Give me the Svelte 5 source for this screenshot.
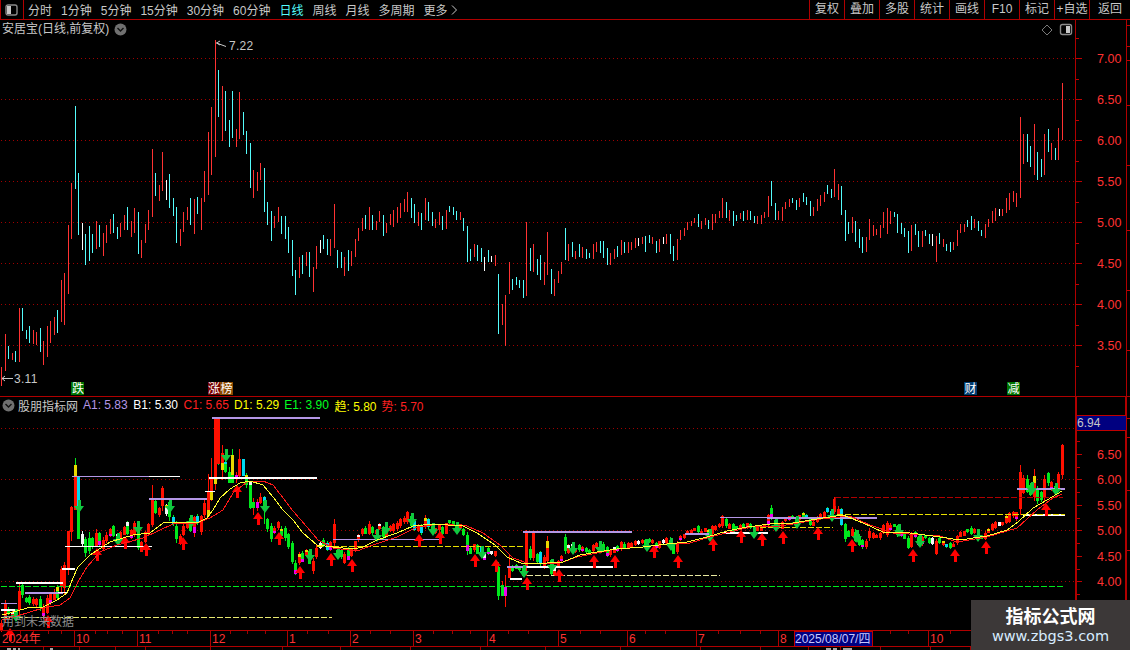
<script>
  const raw = `R367-386 R334-371 C346-359 R353-360 C351-362 R308-362 C308-331 C330-339 C326-343 R330-344 R332-345 C328-352 R341-365 R326-357 R321-343 R317-335 C310-333 R280-322 R273-325 R225-294 R183-239 C106-189 C173-235 W223-250 C234-265 C226-261 C234-253 R221-249 C225-247 R233-256 R225-243 R219-234 C214-233 C227-239 R223-237 R215-230 C207-230 R221-237 R208-233 C212-254 R240-258 R224-243 R210-230 R149-217 C173-196 R185-201 R152-191 W180-200 C174-208 C198-216 C207-243 R229-246 R212-232 R207-220 C198-225 R199-234 C197-214 R198-230 R171-202 R132-195 R107-175 R40-157 C70-117 R86-141 C91-131 C120-147 C91-138 R129-147 R92-139 C112-135 C131-154 C143-188 R170-198 R172-191 R163-180 C168-212 C202-225 C211-241 R216-228 R207-222
  C216-234 C216-239 C227-253 C240-276 C270-295 R257-278 C255-274 R252-266 C252-277 R267-292 R246-269 W240-253 C235-249 C239-255 R239-256 R204-248 C250-268 C252-268 R257-276 C250-271 R251-266 R239-257 R228-241 R218-231 C215-229 R207-230 C215-230 R221-230 R211-222 C215-236 R223-233 R214-225 R210-227 R207-223 R203-218 R199-212 R192-212 C198-218 C204-223 R212-226 C213-230 R198-220 C202-221 C212-226 R219-228 R212-225 C216-230 R210-229 C206-212 C207-215 C211-220 R212-220 C218-231 C226-262 C249-261 R244-257 C245-261 C248-262 W257-271 C250-262 W256-262 R255-266 C274-334 R304-325 R295-346 R262-294 C279-290 C277-285 C280-288 C280-298 R222-296 C248-271 R244-272 C259-275 C255-280 R262-285 R232-275 C269-294 R279-296 R271-283 R262-274 C228-260 R244-261 C242-257 R251-259 C244-257
  R247-258 C249-259 C253-258 R244-259 R242-252 C241-253 C241-258 C248-265 R253-265 R249-259 C246-257 R240-255 C242-253 R242-253 R242-250 R238-248 W238-246 R237-244 C236-252 C235-243 R237-244 C241-253 R239-252 W237-244 R234-244 C234-254 C246-261 R239-260 R230-240 R228-236 R222-230 R221-226 R218-223 C214-227 R221-229 R218-225 C220-229 R214-230 R214-223 R211-218 R198-218 C202-218 R210-221 C211-226 C215-221 R213-219 C211-221 R210-220 C211-220 C216-223 R216-224 R215-224 R212-218 R196-217 C181-206 C203-220 R211-220 R207-221 R202-209 R199-207 C198-203 C200-210 R198-207 C193-202 C197-205 C201-216 R207-216 R199-211 R195-206 R192-202 C185-194 C189-198 R169-197 R184-200 C186-215 C210-241 C222-234 R217-233 C221-242 C229-248 C237-253 R237-252 R219-240 R225-236 R229-235 R225-238 R212-228 R208-234 R211-224 C212-217 C214-233 C223-234 C228-237 C231-253 R225-251 C224-235 C231-247 R231-247 C230-236 C234-244 W234-246 R236-262 C233-244 R239-247 C244-251 C242-252 R242-250 R230-246 R224-233 R224-232 C220-227 C216-230 R219-228 C221-231 C230-236 R224-238 R219-227 R211-223 R208-221 W209-216 R209-216 R198-213 R193-210 R191-202 R193-207 R117-198
  R134-164 C134-162 C146-167 R124-175 C152-180 C159-177 R134-175 C129-152 R143-160 C148-160 R128-160 R83-140`;

  const MAIN = { R: '#ff3232', C: '#54fcfc', W: '#ffffff' };
  const RED = '#ff1000', GRN = '#00e81c', CY = '#00d8f0', YEL = '#e8d800', MAG = '#f000f0', WHT = '#f4f4f4';

  const xOf = (i) => 5 + Math.floor(i * 3.5);
  const bars = raw.trim().split(/\s+/).map((s, idx) => {
    const [a, b] = s.slice(1).split('-').map(Number);
    return { i: idx - 1, x: xOf(idx - 1), t: s[0], top: a, bot: b };
  });

  const map = (y) => 479 + (y - 140) * 0.622;
  const rnd = (n) => {
    const v = Math.sin(n * 127.1 + 11.7) * 43758.5453;
    return v - Math.floor(v);
  };

  const overrides = {
    18: [[531, 569, RED]],
    19: [[507, 532, RED]],
    20: [[465, 476, YEL], [476, 510, RED]],
    21: [[476, 510, CY], [510, 539, GRN]],
    42: [[499, 525, RED]],
    58: [[491, 510, RED], [510, 516, YEL]],
    59: [[479, 491, RED], [491, 500, YEL]],
    60: [[417, 479, RED], [479, 484, YEL]],
    61: [[417, 464, RED]],
    62: [[453, 463, RED], [463, 470, YEL]],
    63: [[462, 464, CY], [464, 472, GRN]],
    64: [[472, 483, GRN]],
    65: [[455, 475, YEL], [475, 483, GRN]],
    66: [[475, 479, MAG]],
    67: [[459, 476, RED]],
    68: [[459, 476, CY]],
    70: [[482, 485, WHT], [485, 508, GRN]],
    71: [[502, 508, GRN]],
    72: [[502, 508, MAG]],
    73: [[497, 503, RED]],
    74: [[497, 501, CY], [501, 510, GRN]],
    141: [[567, 596, GRN]],
    142: [[585, 596, GRN]],
    143: [[587, 596, MAG]],
    144: [[566, 578, RED]],
    149: [[531, 566, RED]],
    151: [[531, 558, RED]]
  };

  const candles = bars.map((b) => {
    const wt = map(b.top), wb = map(b.bot);
    const h = wb - wt;
    let segs;
    if (overrides[b.i]) {
      segs = overrides[b.i].map(([y1, y2, c]) => ({ y: y1, h: y2 - y1, c }));
    } else {
      const a = rnd(b.i), d = rnd(b.i + 500), c = rnd(b.i + 900);
      const top = Math.round(wt + h * (0.04 + 0.2 * a));
      const bot = Math.max(top + 3, Math.round(wb - h * (0.04 + 0.18 * d)));
      const base = b.t === 'R' ? RED : b.t === 'W' ? WHT : c < 0.14 ? CY : GRN;
      segs = [{ y: top, h: bot - top, c: base }];
      const total = bot - top;
      const cap = Math.max(2, Math.round(total * 0.35));
      if (total > 3) {
        if (c >= 0.16 && c < 0.3) {
          segs = [{ y: top, h: total - cap, c: base }, { y: bot - cap, h: cap, c: MAG }];
        } else if (c >= 0.3 && c < 0.36) {
          segs = [{ y: top, h: cap, c: YEL }, { y: top + cap, h: total - cap, c: base }];
        } else if (c >= 0.36 && c < 0.4) {
          segs = [{ y: top, h: cap, c: WHT }, { y: top + cap, h: total - cap, c: base }];
        }
      }
    }
    return { x: b.x, wt, wh: h, col: b.t === 'R' ? RED : b.t === 'W' ? WHT : GRN, segs };
  });

  const pts = (a) => a.map((p) => p.join(',')).join(' ');
  const yellow = pts([[2,615],[10,613],[27,608],[43,607],[57,600],[67,593],[73,578],[78,567],[90,555],[110,542],[133,535],[150,533],[163,523],[173,522],[197,523],[207,518],[213,510],[220,498],[230,489],[240,483],[250,481],[263,485],[273,497],[283,510],[293,520],[303,533],[317,545],[333,547],[353,549],[363,547],[377,540],[397,533],[413,526],[433,524],[463,526],[477,533],[495,545],[507,557],[523,564],[547,563],[563,562],[580,555],[597,552],[617,549],[643,547],[667,544],[687,542],[707,537],[727,531],[747,527],[770,524],[793,523],[817,519],[843,515],[863,523],[883,532],[910,533],[940,537],[960,540],[987,536],[1007,530],[1018,522],[1033,508],[1047,500],[1062,491]]);
  const redLine = pts([[2,620],[10,618],[27,613],[43,608],[60,605],[70,598],[78,582],[87,567],[100,552],[117,545],[143,538],[160,530],[173,524],[197,523],[210,518],[223,510],[233,493],[247,482],[263,481],[273,485],[287,503],[293,511],[307,527],[318,540],[333,548],[357,551],[373,545],[397,537],[417,527],[440,524],[467,526],[483,533],[500,545],[513,558],[527,563],[560,563],[577,557],[597,553],[617,549],[643,547],[667,544],[690,543],[710,537],[730,532],[750,527],[780,526],[793,524],[820,519],[850,516],[870,525],[893,533],[940,536],[957,542],[987,537],[1017,528],[1037,510],[1053,498],[1062,494]]);

  const P = '#b496e6', W = '#ffffff';
  const hlines = [
    [212, 320, 417, P, 2], [72, 149, 476, P, 1], [149, 180, 476, W, 1], [149, 207, 498, P, 2],
    [205, 215, 491, W, 1], [209, 317, 477, W, 2], [65, 152, 546, W, 1], [16, 63, 582, W, 2],
    [25, 63, 592, P, 2], [62, 75, 568, W, 2], [58, 68, 592, W, 1], [1, 17, 603, P, 1], [1, 17, 609, W, 2],
    [333, 439, 539, P, 1], [523, 632, 531, P, 2], [507, 527, 566, P, 2], [527, 613, 566, W, 2],
    [510, 522, 578, W, 2], [685, 710, 533, P, 2], [722, 768, 532, W, 2], [720, 767, 517, P, 1],
    [767, 877, 517, P, 2], [760, 768, 532, W, 2], [1023, 1065, 514, W, 2], [1017, 1065, 488, P, 2]
  ];
  const dashes = [
    [1, 332, 617, '#e8e870', 1], [1, 1064, 586, '#00e81c', 1], [317, 525, 546, '#e8e000', 1],
    [527, 720, 575, '#e8e8a0', 1], [760, 833, 527, '#e8e000', 1], [837, 1065, 514, '#e8e000', 1],
    [835, 1063, 497, '#b00000', 1]
  ];

  const ups = [[237,485],[48,615],[97,548],[125,536],[146,543],[183,537],[258,512],[279,532],[300,566],[331,553],[352,559],[419,534],[440,531],[475,554],[496,559],[527,577],[559,569],[594,555],[615,555],[654,545],[678,555],[713,538],[741,530],[762,533],[783,531],[818,527],[852,539],[913,549],[955,549],[986,541],[1046,503],[10,628]];
  const downs = [[79,513],[226,462],[265,513],[16,622],[118,546],[138,534],[170,513],[191,528],[338,560],[310,562],[377,542],[386,535],[412,526],[433,536],[457,535],[482,559],[524,578],[552,572],[573,555],[600,554],[647,552],[671,551],[710,542],[754,539],[776,532],[797,529],[832,522],[857,543],[899,537],[920,548],[978,542],[1032,495],[1056,496]];
  const upArrow = (x, y) => `${x},${y} ${x + 5},${y + 7} ${x + 2},${y + 7} ${x + 2},${y + 13} ${x - 1},${y + 13} ${x - 1},${y + 7} ${x - 5},${y + 7}`;
  const downArrow = (x, y) => `${x},${y} ${x + 5},${y - 7} ${x + 2},${y - 7} ${x + 2},${y - 13} ${x - 1},${y - 13} ${x - 1},${y - 7} ${x - 5},${y - 7}`;

  const leftTools = ['分时', '1分钟', '5分钟', '15分钟', '30分钟', '60分钟', '日线', '周线', '月线', '多周期'];
  const rightTools = ['复权', '叠加', '多股', '统计', '画线', 'F10', '标记', '+自选', '返回'];

  const gridMain = [58, 99, 140, 181, 222, 263, 304, 345];
  const axisMain = [[58, '7.00'], [99, '6.50'], [140, '6.00'], [181, '5.50'], [222, '5.00'], [263, '4.50'], [304, '4.00'], [345, '3.50']];
  const minorMain = [38, 79, 120, 161, 202, 243, 284, 325, 366];
  const gridSub = [428, 479, 530, 581];
  const axisSub = [[454, '6.50'], [479, '6.00'], [505, '5.50'], [530, '5.00'], [556, '4.50'], [581, '4.00']];
  const minorSub = [441, 467, 492, 518, 543, 569, 594, 607];
  const farTicks = [25, 46, 60, 105, 165, 230, 290, 350, 418, 437, 490, 550, 610];

  const legend = [
    ['A1:', '5.83', '#b496e6', false], ['B1:', '5.30', '#ffffff', false], ['C1:', '5.65', '#ff2020', false],
    ['D1:', '5.29', '#ffff00', false], ['E1:', '3.90', '#00ff20', false], ['趋:', '5.80', '#ffff00', true], ['势:', '5.70', '#ff2020', true]
  ];

  const months = [[76, 74, '10'], [139, 137, '11'], [212, 210, '12'], [289, 287, '1'], [352, 350, '2'], [415, 413, '3'], [489, 487, '4'], [560, 558, '5'], [629, 627, '6'], [698, 696, '7'], [780, 778, '8'], [930, 928, '10']];
  const minorTime = [20, 33, 48, 61, 95, 107, 122, 158, 172, 187, 230, 247, 265, 307, 328, 370, 390, 433, 452, 470, 508, 528, 580, 600, 645, 665, 718, 740, 760, 890, 908, 950, 1000, 1040];
  const stripSeps = [43, 79, 115, 145, 210, 282, 340, 410, 480, 545, 620, 700, 760, 808, 840, 880, 930, 970, 1010, 1060, 1100];
  const stripMarks = [[7, 4], [13, 3], [18, 2], [50, 3], [826, 5], [833, 4], [843, 6], [849, 3]];
</script>

<div class="screen">
  <header class="toolbar">
    <div class="sidebtn">
      <svg width="14" height="12" viewBox="0 0 14 12"><rect x="1" y="1" width="11" height="10" rx="2" fill="none" stroke="#8a8a8a" stroke-width="1.4"/><rect x="2" y="2" width="4" height="8" fill="#c8c8c8"/></svg>
    </div>
    <nav class="tools">
      {#each leftTools as t}
        <span class:active={t === '日线'}>{t}</span>
      {/each}
      <span class="more">更多<svg width="7" height="10" viewBox="0 0 7 10"><path d="M1 0.5 L5.5 5 L1 9.5" fill="none" stroke="#c8c8c8"/></svg></span>
    </nav>
    <nav class="buttons">
      {#each rightTools as t}
        <span>{t}</span>
      {/each}
    </nav>
  </header>

  <section class="panel upper">
    <svg class="chart" width="1130" height="376" viewBox="0 20 1130 376" shape-rendering="crispEdges">
      {#each gridMain as y}
        <line x1="1" x2="1075" y1={y + 0.5} y2={y + 0.5} stroke="#a00000" stroke-dasharray="1 3"/>
      {/each}
      {#each bars as b}
        <rect x={b.x} y={b.top} width="1" height={b.bot - b.top} fill={MAIN[b.t]}/>
      {/each}

      <path d="M216.5 43 L226 46.5 M216.5 43 L220 41 M216.5 43 L220 45" fill="none" stroke="#c8c8c8" shape-rendering="auto"/>
      <text x="229" y="50" class="note">7.22</text>
      <path d="M2 378.5 H13 M2 378.5 L5 376 M2 378.5 L5 381" fill="none" stroke="#c8c8c8" shape-rendering="auto"/>
      <text x="14" y="383" class="note">3.11</text>

      <rect x="71" y="382" width="13" height="13" fill="#007400"/>
      <text x="72" y="393" class="tag">跌</text>
      <rect x="208" y="382" width="12" height="13" fill="#780000"/>
      <text x="208" y="393" class="tag">涨</text>
      <rect x="220" y="382" width="13" height="13" fill="#8a4a00"/>
      <text x="220.5" y="393" class="tag">榜</text>
      <rect x="964" y="382" width="13" height="13" fill="#003c70"/>
      <text x="964.5" y="393" class="tag">财</text>
      <rect x="1007" y="382" width="13" height="13" fill="#007400"/>
      <text x="1007.5" y="393" class="tag">减</text>

      <path d="M1047 25 L1052 30 L1047 35 L1042 30 Z" fill="none" stroke="#7a7a7a" shape-rendering="auto"/>
      <rect x="1060.5" y="24.5" width="11" height="10" rx="2" fill="none" stroke="#8a8a8a" stroke-width="1.4" shape-rendering="auto"/>
      <rect x="1066" y="26" width="4" height="7" fill="#c8c8c8"/>

      <rect x="1075" y="20" width="1" height="376" fill="#b00000"/>
      <rect x="1126" y="20" width="1" height="376" fill="#b00000"/>
      {#each axisMain as [y, label]}
        <rect x="1076" y={y} width="6" height="1" fill="#c00000"/>
        <text x="1097" y={y + 5} class="axis">{label}</text>
      {/each}
      {#each minorMain as y}
        <rect x="1076" y={y} width="3" height="1" fill="#c00000"/>
      {/each}
      {#each farTicks as y}
        {#if y < 396}
          <rect x="1127" y={y} width="3" height="1" fill="#c00000"/>
        {/if}
      {/each}
    </svg>
    <div class="title">
      <span>安居宝(日线,前复权)</span>
      <svg class="chev" width="13" height="13" viewBox="0 0 13 13"><circle cx="6.5" cy="6.5" r="6" fill="#707070"/><path d="M3.5 5 L6.5 8 L9.5 5" fill="none" stroke="#111" stroke-width="1.4"/></svg>
    </div>
  </section>

  <section class="panel lower">
    <svg class="chart" width="1130" height="253" viewBox="0 397 1130 253" shape-rendering="crispEdges">
      {#each gridSub as y}
        <line x1="1" x2="1075" y1={y + 0.5} y2={y + 0.5} stroke="#a00000" stroke-dasharray="1 3"/>
      {/each}
      {#each candles as c}
        <rect x={c.x} y={c.wt} width="1" height={c.wh} fill={c.col}/>
        {#each c.segs as s}
          <rect x={c.x - 1} y={s.y} width="3" height={s.h} fill={s.c}/>
        {/each}
      {/each}
      {#each hlines as [a, b, y, c, w]}
        <rect x={a} y={y} width={b - a} height={w} fill={c}/>
      {/each}
      {#each dashes as [a, b, y, c, w]}
        <line x1={a} x2={b} y1={y + 0.5} y2={y + 0.5} stroke={c} stroke-width={w} stroke-dasharray="6 2"/>
      {/each}
      <rect x="835" y="497" width="1" height="9" fill="#b00000"/>

      <g shape-rendering="auto">
        {#each ups as [x, y]}
          <polygon points={upArrow(x, y)} fill="#ff0000"/>
        {/each}
        {#each downs as [x, y]}
          <polygon points={downArrow(x, y)} fill="#10c840"/>
        {/each}
      </g>
      <polyline points={redLine} fill="none" stroke="#ff1818" stroke-width="1"/>
      <polyline points={yellow} fill="none" stroke="#ffff30" stroke-width="1"/>

      <text x="2" y="626" class="warn">用到未来数据</text>

      <rect x="1075" y="397" width="2" height="233" fill="#b00000"/>
      <rect x="1125" y="397" width="2" height="233" fill="#b00000"/>
      {#each axisSub as [y, label]}
        <rect x="1077" y={y} width="5" height="1" fill="#c00000"/>
        <text x="1097" y={y + 5} class="axis">{label}</text>
      {/each}
      {#each minorSub as y}
        <rect x="1077" y={y} width="3" height="1" fill="#c00000"/>
      {/each}
      {#each farTicks as y}
        {#if y > 396}
          <rect x="1127" y={y} width="3" height="1" fill="#c00000"/>
        {/if}
      {/each}
      <rect x="1077" y="415" width="49" height="16" fill="#000080"/>
      <rect x="1077" y="415" width="49" height="1" fill="#c00000"/>
      <rect x="1077" y="430" width="49" height="1" fill="#c00000"/>
      <text x="1077" y="427" class="cursor">6.94</text>

      <rect x="0" y="630" width="1130" height="1" fill="#b00000"/>
      <rect x="0" y="646" width="1130" height="1" fill="#b00000"/>
      <text x="2" y="643" class="time">2024年</text>
      {#each minorTime as x}
        <rect {x} y="631" width="1" height="3" fill="#a00000"/>
      {/each}
      {#each months as [tx, lx, label]}
        <rect x={lx} y="630" width="1" height="16" fill="#b00000"/>
        <text x={tx} y="643" class="time">{label}</text>
      {/each}
      <rect x="794" y="631" width="78" height="15" fill="#000080" stroke="#c00000"/>
      <text x="795" y="643" class="date">2025/08/07/四</text>
      {#each stripSeps as x}
        <rect {x} y="647" width="1" height="3" fill="#a00000"/>
      {/each}
      {#each stripMarks as [x, w]}
        <rect {x} y="648" width={w} height="2" fill="#a8a8a8"/>
      {/each}
    </svg>
    <div class="legend">
      <svg class="chev" width="13" height="13" viewBox="0 0 13 13"><circle cx="6.5" cy="6.5" r="6" fill="#707070"/><path d="M3.5 5 L6.5 8 L9.5 5" fill="none" stroke="#111" stroke-width="1.4"/></svg>
      <span class="name">股朋指标网</span>
      {#each legend as [k, v, c, cjk]}
        <span class="item" class:cjk style:color={c}>{k} {v}</span>
      {/each}
    </div>
  </section>

  <aside class="stamp">
    <div class="stamp-title">指标公式网</div>
    <div class="stamp-url">www.zbgs3.com</div>
  </aside>
</div>

<style>
  :global(body) {
    margin: 0;
    background: #000;
  }
  .screen {
    position: relative;
    width: 1130px;
    height: 650px;
    overflow: hidden;
    background: #000;
    font-family: "Liberation Sans", "Noto Sans CJK SC", sans-serif;
    color: #c8c8c8;
  }
  .toolbar {
    display: flex;
    align-items: center;
    height: 19px;
    border-bottom: 1px solid #b00000;
    font-size: 12px;
  }
  .sidebtn {
    display: flex;
    align-items: center;
    justify-content: center;
    width: 22px;
    height: 19px;
    border-left: 1px solid #b00000;
    border-right: 1px solid #b00000;
  }
  .tools {
    display: flex;
    align-items: center;
    gap: 9px;
    margin-left: 4px;
    white-space: nowrap;
  }
  .tools .active {
    color: #54fcfc;
  }
  .more {
    display: flex;
    align-items: center;
    gap: 3px;
  }
  .buttons {
    display: flex;
    margin-left: auto;
  }
  .buttons span {
    box-sizing: border-box;
    width: 35px;
    height: 19px;
    line-height: 19px;
    text-align: center;
    border-left: 1px solid #b00000;
    white-space: nowrap;
  }
  .buttons span:last-child {
    width: 41px;
  }
  .panel {
    position: relative;
  }
  .upper {
    height: 376px;
    border-bottom: 1px solid #b00000;
  }
  .lower {
    height: 253px;
  }
  .chart {
    display: block;
  }
  .title {
    position: absolute;
    left: 2px;
    top: 2px;
    display: flex;
    align-items: center;
    gap: 5px;
    font-size: 12px;
    line-height: 15px;
  }
  .legend {
    position: absolute;
    left: 2px;
    top: 0;
    display: flex;
    align-items: center;
    height: 16px;
    font-size: 12px;
    white-space: nowrap;
  }
  .legend .name {
    box-sizing: border-box;
    width: 68px;
    padding-left: 3px;
    font-size: 12px;
    color: #c8c8c8;
  }
  .legend .item {
    width: 50.3px;
    flex: none;
  }
  .legend .item.cjk {
    width: 47px;
  }
  .note {
    font-size: 12px;
    letter-spacing: 0.3px;
    fill: #c8c8c8;
  }
  .tag {
    font-size: 12px;
    fill: #fff;
    font-family: "Noto Sans CJK SC", sans-serif;
  }
  .axis {
    font-size: 12.5px;
    fill: #ff3232;
  }
  .cursor {
    font-size: 12px;
    fill: #c8c8c8;
  }
  .warn {
    font-size: 12px;
    fill: #8c8c8c;
    font-family: "Noto Sans CJK SC", sans-serif;
  }
  .time {
    font-size: 12px;
    fill: #ff3232;
  }
  .date {
    font-size: 12px;
    fill: #c8c8ff;
  }
  .stamp {
    position: absolute;
    left: 971px;
    top: 600px;
    width: 159px;
    height: 50px;
    background: #3c3838;
    text-align: center;
  }
  .stamp-title {
    margin-top: 4px;
    font-size: 18px;
    line-height: 22px;
    font-weight: 700;
    color: #fff;
    font-family: "Noto Sans CJK SC", sans-serif;
  }
  .stamp-url {
    margin-top: 1px;
    font-size: 14.5px;
    line-height: 18px;
    color: #d8ecff;
    font-family: "DejaVu Sans", sans-serif;
  }
</style>
